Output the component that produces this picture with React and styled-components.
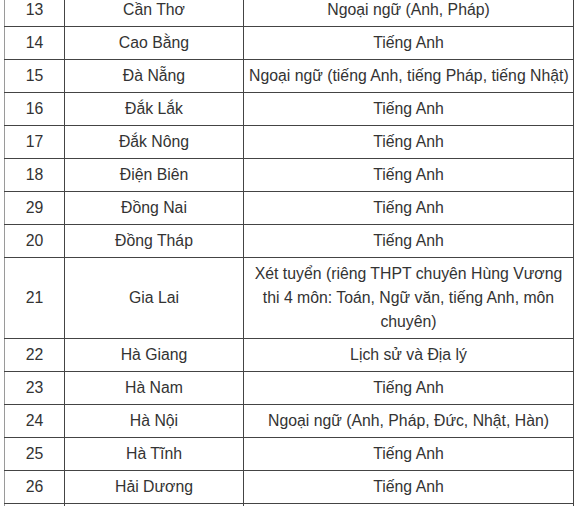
import React from 'react';
import styled, { createGlobalStyle } from 'styled-components';

const GlobalStyle = createGlobalStyle`
  html, body {
    margin: 0;
    padding: 0;
    background: #ffffff;
  }
  body {
    font-family: "Liberation Sans", Arial, sans-serif;
    color: #333333;
  }
`;

const Viewport = styled.div`
  width: 580px;
  height: 506px;
  overflow: hidden;
  background: #fff;
`;

const Table = styled.table`
  margin: -6px 0 0 4px;
  width: 570px;
  border-collapse: collapse;
  table-layout: fixed;
  font-size: 15.8px;
  line-height: 24px;
  border-left: 1px solid #9a9a9a;
  border-right: 1px solid #444;
`;

const Row = styled.tr`
  border-bottom: 1px solid #444;
`;

const Cell = styled.td`
  padding: 4px 2px;
  height: ${({ $empty }) => ($empty ? '24px' : 'auto')};
  text-align: center;
  vertical-align: middle;
  border-right: 1px solid #444;
  color: #333;
  &:last-child {
    border-right: none;
    padding: 4px 5px;
  }
`;

const Nowrap = styled.span`
  white-space: nowrap;
`;

const rows = [
  ['13', 'Cần Thơ', 'Ngoại ngữ (Anh, Pháp)'],
  ['14', 'Cao Bằng', 'Tiếng Anh'],
  ['15', 'Đà Nẵng', 'Ngoại ngữ (tiếng Anh, tiếng Pháp, tiếng Nhật)'],
  ['16', 'Đắk Lắk', 'Tiếng Anh'],
  ['17', 'Đắk Nông', 'Tiếng Anh'],
  ['18', 'Điện Biên', 'Tiếng Anh'],
  ['29', 'Đồng Nai', 'Tiếng Anh'],
  ['20', 'Đồng Tháp', 'Tiếng Anh'],
  ['21', 'Gia Lai', 'Xét tuyển (riêng THPT chuyên Hùng Vương thi 4 môn: Toán, Ngữ văn, tiếng Anh, môn chuyên)'],
  ['22', 'Hà Giang', 'Lịch sử và Địa lý'],
  ['23', 'Hà Nam', 'Tiếng Anh'],
  ['24', 'Hà Nội', 'Ngoại ngữ (Anh, Pháp, Đức, Nhật, Hàn)'],
  ['25', 'Hà Tĩnh', 'Tiếng Anh'],
  ['26', 'Hải Dương', 'Tiếng Anh'],
];

export default function App() {
  return (
    <Viewport>
      <GlobalStyle />
      <Table>
        <colgroup>
          <col style={{ width: 60 }} />
          <col style={{ width: 179 }} />
          <col style={{ width: 330 }} />
        </colgroup>
        <tbody>
          {rows.map(([no, province, subject]) => (
            <Row key={no + province}>
              <Cell>{no}</Cell>
              <Cell>{province}</Cell>
              <Cell>
                {subject.length < 50 ? <Nowrap>{subject}</Nowrap> : subject}
              </Cell>
            </Row>
          ))}
          <Row>
            <Cell $empty />
            <Cell $empty />
            <Cell $empty />
          </Row>
        </tbody>
      </Table>
    </Viewport>
  );
}
